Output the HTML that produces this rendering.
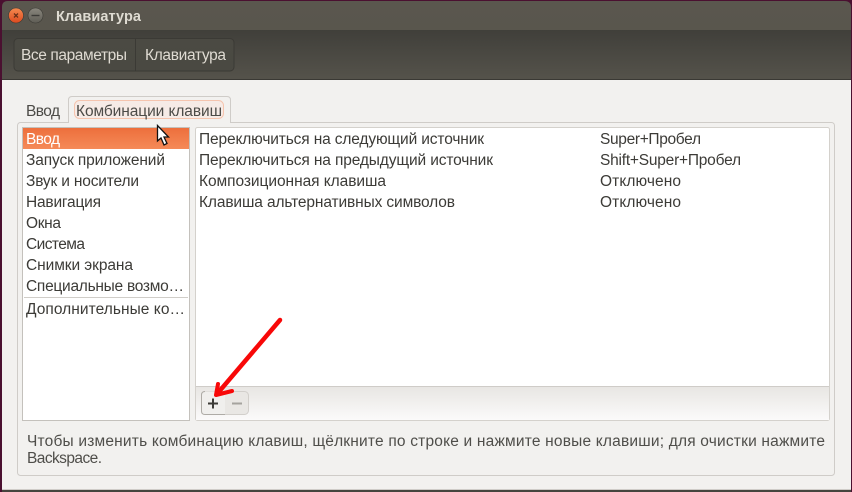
<!DOCTYPE html>
<html><head><meta charset="utf-8"><title>Клавиатура</title>
<style>html,body{margin:0;padding:0;width:852px;height:492px;overflow:hidden;background:#4a1030}svg{display:block}
text{font-family:"Liberation Sans",sans-serif;font-size:15.5px;fill:#3c3b37}</style></head><body>
<svg width="852" height="492" viewBox="0 0 852 492" xmlns="http://www.w3.org/2000/svg">
<defs>
<linearGradient id="tb" x1="0" y1="0" x2="0" y2="1"><stop offset="0" stop-color="#5a574e"/><stop offset="1" stop-color="#45443e"/></linearGradient>
<linearGradient id="bar" x1="0" y1="0" x2="0" y2="1"><stop offset="0" stop-color="#403f3a"/><stop offset="1" stop-color="#55534b"/></linearGradient>
<linearGradient id="tool" x1="0" y1="0" x2="0" y2="1"><stop offset="0" stop-color="#4b4a43"/><stop offset="1" stop-color="#4a4942"/></linearGradient>
<linearGradient id="sel" x1="0" y1="0" x2="0" y2="1"><stop offset="0" stop-color="#ed6f3c"/><stop offset="1" stop-color="#f58a58"/></linearGradient>
<linearGradient id="lt" x1="0" y1="0" x2="0" y2="1"><stop offset="0" stop-color="#e8e6e3"/><stop offset="1" stop-color="#fbfafa"/></linearGradient>
<linearGradient id="cl" x1="0" y1="0" x2="0" y2="1"><stop offset="0" stop-color="#f58a4f"/><stop offset="1" stop-color="#dd4a1f"/></linearGradient>
<linearGradient id="mn" x1="0" y1="0" x2="0" y2="1"><stop offset="0" stop-color="#8a877e"/><stop offset="1" stop-color="#5f5d55"/></linearGradient>
</defs>
<rect width="852" height="492" fill="#4a1030"/>
<path d="M2 492V7Q2 1 8 1H844Q851 1 851 7V492Z" fill="url(#tb)"/>
<rect x="2" y="30" width="849" height="50" fill="url(#bar)"/>
<rect x="2" y="79" width="849" height="1" fill="#3a3934"/>
<rect x="2" y="80" width="849" height="410" fill="#f2f1ef"/>
<path d="M2 489.500H851" stroke="#cfccc8"/>

<circle cx="16" cy="15.500" r="7.500" fill="url(#cl)" stroke="#3a3934" stroke-width=".6"/>
<path d="M14 13.500l4 4m0-4l-4 4" stroke="#6a3018" stroke-width="1.300"/>
<circle cx="35.500" cy="15.500" r="7.500" fill="url(#mn)" stroke="#3a3934" stroke-width=".6"/>
<path d="M31.500 15.500h8" stroke="#3c3b37" stroke-width="1.400"/>
<text x="56" y="21" textLength="85" lengthAdjust="spacing" style="font-weight:bold;font-size:14.500px;fill:#dfdbd2">Клавиатура</text>

<rect x="14" y="38.500" width="220" height="32.500" rx="4" fill="url(#tool)" stroke="#3b3a35"/>
<path d="M135.500 38v33" stroke="#3b3a35"/>
<text x="21" y="60" textLength="106" lengthAdjust="spacing" style="fill:#dfdbd2">Все параметры</text>
<text x="145" y="60" textLength="81" lengthAdjust="spacing" style="fill:#dfdbd2">Клавиатура</text>

<rect x="17.500" y="122.500" width="817" height="353" rx="3" fill="#f2f1ef" stroke="#cfccc8"/>
<path d="M68.500 122.500V100Q68.500 96.500 72 96.500H227Q230.500 96.500 230.500 100V122.500" fill="#f2f1ef" stroke="#cfccc8"/>
<rect x="69" y="120" width="161" height="4" fill="#f2f1ef"/>
<rect x="74.500" y="100.500" width="149" height="18" rx="5" fill="#f6ebe6" stroke="#f5c4ae"/>
<text x="26" y="116" textLength="34" lengthAdjust="spacing" style="fill:#4c4b47">Ввод</text>
<text x="76" y="116" textLength="146" lengthAdjust="spacing" style="fill:#4c4b47">Комбинации клавиш</text>

<rect x="22.500" y="127.500" width="167" height="293" fill="#fff" stroke="#c4c1bc"/>
<rect x="23" y="128" width="166" height="21" fill="url(#sel)"/>
<text x="26" y="144" textLength="34" lengthAdjust="spacing" style="fill:#fff">Ввод</text>
<text x="26" y="165" textLength="139" lengthAdjust="spacing">Запуск приложений</text>
<text x="26" y="186" textLength="113" lengthAdjust="spacing">Звук и носители</text>
<text x="26" y="207" textLength="75" lengthAdjust="spacing">Навигация</text>
<text x="26" y="228" textLength="35" lengthAdjust="spacing">Окна</text>
<text x="26" y="249" textLength="59" lengthAdjust="spacing">Система</text>
<text x="26" y="270" textLength="107" lengthAdjust="spacing">Снимки экрана</text>
<text x="26" y="291" textLength="158" lengthAdjust="spacing">Специальные возмо…</text>
<path d="M24 297.500H188" stroke="#d0cdc8"/>
<text x="26" y="314" textLength="159" lengthAdjust="spacing">Дополнительные ко…</text>

<rect x="195.500" y="127.500" width="634" height="293" rx="2" fill="#fff" stroke="#d4d1cc"/>
<rect x="196" y="387" width="633" height="33" fill="url(#lt)"/>
<path d="M196 386.500H829" stroke="#cfccc8"/>
<text x="199" y="144" textLength="285" lengthAdjust="spacing">Переключиться на следующий источник</text>
<text x="199" y="165" textLength="294" lengthAdjust="spacing">Переключиться на предыдущий источник</text>
<text x="199" y="186" textLength="187" lengthAdjust="spacing">Композиционная клавиша</text>
<text x="199" y="207" textLength="256" lengthAdjust="spacing">Клавиша альтернативных символов</text>
<text x="600" y="144" textLength="101" lengthAdjust="spacing">Super+Пробел</text>
<text x="600" y="165" textLength="141" lengthAdjust="spacing">Shift+Super+Пробел</text>
<text x="600" y="186" textLength="81" lengthAdjust="spacing">Отключено</text>
<text x="600" y="207" textLength="81" lengthAdjust="spacing">Отключено</text>

<rect x="201.500" y="391.500" width="47" height="23" rx="4" fill="#e9e7e4" stroke="#d2cfcb"/>
<path d="M205 391.500H225V414.500H205Q201.500 414.500 201.500 411V395Q201.500 391.500 205 391.500Z" fill="#f0efed"/>
<path d="M225 414.500H205Q201.500 414.500 201.500 411V395Q201.500 391.500 205 391.500" fill="none" stroke="#aeaba6"/>
<path d="M208 403.500h10M213 398.500v10" stroke="#3c3b37" stroke-width="2"/>
<path d="M232 403.500h10" stroke="#a5a39e" stroke-width="2"/>

<g fill="none" stroke="#f80808" stroke-linecap="round" stroke-linejoin="round">
<path d="M280 320L217 394" stroke-width="4.500"/>
<path d="M218 384L216 395L232 391" stroke-width="4"/>
</g>

<text x="27" y="446" textLength="798" lengthAdjust="spacing" style="fill:#4f4e4a">Чтобы изменить комбинацию клавиш, щёлкните по строке и нажмите новые клавиши; для очистки нажмите</text>
<text x="27" y="463" textLength="75" lengthAdjust="spacing" style="fill:#4f4e4a">Backspace.</text>

<path d="M157.500 125.500V141L161 138L164 145L167 143.500L164 137H168.500Z" fill="#fff" stroke="#111" stroke-width="1.300"/>
</svg>
</body></html>
